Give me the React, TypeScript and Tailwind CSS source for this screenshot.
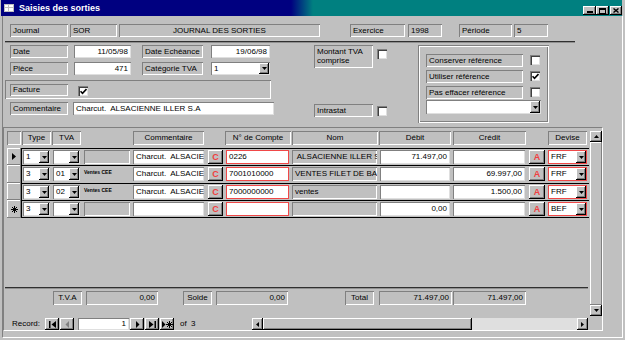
import clsx from 'clsx';
import type { ReactNode } from 'react';

// win98 bevels
const sunk = 'bg-[#c0c0c0] shadow-[inset_1px_1px_#808080,inset_-1px_-1px_#ffffff]';
const well = 'bg-white shadow-[inset_1px_1px_#808080,inset_-1px_-1px_#dfdfdf]';
const bevel =
  'bg-[#c0c0c0] shadow-[inset_-1px_-1px_#000000,inset_1px_1px_#ffffff,inset_-2px_-2px_#808080]';
const raised = 'bg-[#c0c0c0] shadow-[inset_-1px_-1px_#808080,inset_1px_1px_#ffffff]';

type BoxProps = { className?: string; children?: ReactNode };

function Label({ className, children }: BoxProps) {
  return (
    <div
      className={clsx(
        'flex shrink-0 items-center overflow-hidden whitespace-pre px-[3px]',
        sunk,
        className
      )}
    >
      {children}
    </div>
  );
}

function Field({ className, children }: BoxProps) {
  return (
    <div
      className={clsx(
        'flex shrink-0 items-center overflow-hidden whitespace-pre px-[3px]',
        well,
        className
      )}
    >
      {children}
    </div>
  );
}

function RedField({ className, children }: BoxProps) {
  return (
    <div
      className={clsx(
        'flex shrink-0 items-center overflow-hidden whitespace-pre bg-white px-[3px] shadow-[inset_0_0_0_1px_#f04848]',
        className
      )}
    >
      {children}
    </div>
  );
}

function DropButton() {
  return (
    <div className={clsx('m-[1px] flex w-[10px] shrink-0 items-center justify-center', bevel)}>
      <svg width="5" height="3" viewBox="0 0 5 3">
        <polygon points="0,0 5,0 2.5,3" fill="#000" />
      </svg>
    </div>
  );
}

function Combo({ className, children, red }: BoxProps & { red?: boolean }) {
  return (
    <div
      className={clsx(
        'flex shrink-0',
        red ? 'bg-white shadow-[inset_0_0_0_1px_#f04848]' : well,
        className
      )}
    >
      <div className="flex flex-1 items-center overflow-hidden whitespace-pre pl-[3px]">
        {children}
      </div>
      <DropButton />
    </div>
  );
}

function Check({ checked, className }: { checked?: boolean; className?: string }) {
  return (
    <div
      className={clsx(
        'flex h-[10px] w-[10px] shrink-0 items-center justify-center bg-white shadow-[inset_1px_1px_#808080,inset_2px_2px_#404040,inset_-1px_-1px_#dfdfdf]',
        className
      )}
    >
      {checked ? (
        <svg width="7" height="7" viewBox="0 0 7 7" className="ml-[1px] mt-[1px]">
          <path d="M0.5 3.2 L2.5 5.3 L6.5 1" stroke="#000" strokeWidth="1.6" fill="none" />
        </svg>
      ) : null}
    </div>
  );
}

function RedBtn({ className, children }: BoxProps) {
  return (
    <div
      className={clsx(
        'flex shrink-0 items-center justify-center text-[9px] font-bold text-[#f04040]',
        bevel,
        className
      )}
    >
      {children}
    </div>
  );
}

function Star({ x = 0 }: { x?: number }) {
  return (
    <g stroke="#000" strokeWidth="1" transform={`translate(${x} 0)`}>
      <path d="M3.5 0 V7 M0 3.5 H7 M1 1 L6 6 M6 1 L1 6" />
    </g>
  );
}

function TitleBar() {
  return (
    <div className="ml-[1px] mr-[3px] flex h-[16px] shrink-0 items-start bg-[linear-gradient(90deg,#000080_0px,#000080_290px,#008080_312px,#008080_100%)]">
      <svg width="10" height="8" viewBox="0 0 10 8" className="ml-[3px] mt-[4px]">
        <rect x="0" y="0" width="10" height="8" fill="#c0c0c0" />
        <rect x="1" y="1" width="3" height="2" fill="#fff" />
        <rect x="5" y="1" width="4" height="2" fill="#fff" />
        <rect x="1" y="4" width="3" height="3" fill="#fff" />
        <rect x="5" y="4" width="4" height="3" fill="#fff" />
      </svg>
      <span className="ml-[5px] text-[9px] font-bold leading-[16px] text-white">
        Saisies des sorties
      </span>
      <div className="ml-auto mt-[6px] flex">
        <div className={clsx('flex h-[9px] w-[13px] items-end justify-center pb-[2px]', bevel)}>
          <svg width="6" height="2">
            <rect width="6" height="2" fill="#000" />
          </svg>
        </div>
        <div className={clsx('flex h-[9px] w-[13px] items-center justify-center', bevel)}>
          <svg width="7" height="6" viewBox="0 0 7 6">
            <rect x="0.5" y="0.5" width="6" height="5" fill="none" stroke="#000" />
            <rect x="0" y="0" width="7" height="2" fill="#000" />
          </svg>
        </div>
        <div className={clsx('ml-[1px] flex h-[9px] w-[12px] items-center justify-center', bevel)}>
          <svg width="6" height="5" viewBox="0 0 6 5">
            <path d="M0.5 0.5 L5.5 4.5 M5.5 0.5 L0.5 4.5" stroke="#000" strokeWidth="1.4" />
          </svg>
        </div>
      </div>
    </div>
  );
}

type Row = {
  h: string;
  sel: '' | 'cur' | 'new';
  type: string;
  tva: string;
  note: string;
  box: boolean;
  comment: string;
  compte: string;
  nom: string;
  debit: string;
  credit: string;
  devise: string;
  last?: boolean;
};

const rows: Row[] = [
  {
    h: 'h-[17px]',
    sel: 'cur',
    type: '1',
    tva: '',
    note: '',
    box: true,
    comment: 'Charcut.  ALSACIE',
    compte: '0226',
    nom: ' ALSACIENNE ILLER S',
    debit: '71.497,00',
    credit: '',
    devise: 'FRF'
  },
  {
    h: 'h-[18px]',
    sel: '',
    type: '3',
    tva: '01',
    note: 'Ventes CEE',
    box: false,
    comment: 'Charcut.  ALSACIE',
    compte: '7001010000',
    nom: 'VENTES FILET DE BA',
    debit: '',
    credit: '69.997,00',
    devise: 'FRF'
  },
  {
    h: 'h-[17px]',
    sel: '',
    type: '3',
    tva: '02',
    note: 'Ventes CEE',
    box: false,
    comment: 'Charcut.  ALSACIE',
    compte: '7000000000',
    nom: 'ventes',
    debit: '',
    credit: '1.500,00',
    devise: 'FRF'
  },
  {
    h: 'h-[18px]',
    sel: 'new',
    type: '3',
    tva: '',
    note: '',
    box: true,
    comment: '',
    compte: '',
    nom: '',
    debit: '0,00',
    credit: '',
    devise: 'BEF',
    last: true
  }
];

function DetailRow({ row }: { row: Row }) {
  return (
    <div className={clsx('flex', row.h)}>
      <div className={clsx('ml-[3px] flex w-[14px] shrink-0 items-center justify-center', raised)}>
        {row.sel === 'cur' ? (
          <svg width="4" height="7" viewBox="0 0 4 7">
            <polygon points="0,0 4,3.5 0,7" fill="#000" />
          </svg>
        ) : null}
        {row.sel === 'new' ? (
          <svg width="7" height="7" viewBox="0 0 7 7">
            <Star />
          </svg>
        ) : null}
      </div>
      <div
        className={clsx(
          'flex w-[568px] items-start border-l border-t border-black',
          row.last && 'border-b'
        )}
      >
        <Combo className="ml-[1px] mt-[1px] h-[14px] w-[27px]">{row.type}</Combo>
        <Combo className="ml-[3px] mt-[1px] h-[14px] w-[27px]">{row.tva}</Combo>
        {row.box ? (
          <div className={clsx('ml-[4px] mt-[1px] h-[14px] w-[46px] shrink-0', sunk)} />
        ) : (
          <div className="ml-[4px] mt-[3px] w-[46px] shrink-0 whitespace-nowrap text-[5px] font-bold leading-[6px]">
            {row.note}
          </div>
        )}
        <Field className="ml-[3px] mt-[1px] h-[14px] w-[71px]">{row.comment}</Field>
        <RedBtn className="ml-[4px] mt-[1px] h-[14px] w-[15px]">C</RedBtn>
        <RedField className="ml-[3px] mt-[1px] h-[14px] w-[63px]">{row.compte}</RedField>
        <Label className="ml-[3px] mt-[1px] h-[14px] w-[85px]">{row.nom}</Label>
        <Field className="ml-[3px] mt-[1px] h-[14px] w-[70px] justify-end">{row.debit}</Field>
        <Field className="ml-[3px] mt-[1px] h-[14px] w-[72px] justify-end">{row.credit}</Field>
        <RedBtn className="ml-[4px] mt-[1px] h-[14px] w-[16px]">A</RedBtn>
        <Combo red className="ml-[3px] mt-[1px] h-[14px] w-[39px]">
          {row.devise}
        </Combo>
      </div>
    </div>
  );
}

function NavBtn({ className, children }: BoxProps) {
  return (
    <div className={clsx('flex h-[12px] w-[14px] shrink-0 items-center justify-center', bevel, className)}>
      {children}
    </div>
  );
}

function SubForm() {
  return (
    <div className="mt-[4px] flex h-[204px] w-[600px] shrink-0 flex-col border border-b-white border-l-[#808080] border-r-white border-t-[#808080]">
      <div className="flex h-[189px]">
        <div className="flex w-[586px] flex-col pt-[3px]">
          {/* column headers */}
          <div className="flex h-[14px]">
            <div className={clsx('ml-[3px] w-[14px] shrink-0', sunk)} />
            <Label className="ml-[1px] h-[14px] w-[29px] justify-center">Type</Label>
            <Label className="ml-[1px] h-[14px] w-[29px] justify-center">TVA</Label>
            <Label className="ml-[52px] h-[14px] w-[71px] justify-center">Commentaire</Label>
            <Label className="ml-[21px] h-[14px] w-[66px] justify-center">N° de Compte</Label>
            <Label className="ml-[1px] h-[14px] w-[86px] justify-center">Nom</Label>
            <Label className="ml-[1px] h-[14px] w-[72px] justify-center">Débit</Label>
            <Label className="ml-[2px] h-[14px] w-[73px] justify-center">Crédit</Label>
            <Label className="ml-[22px] h-[14px] w-[39px] justify-center">Devise</Label>
          </div>

          <div className="mt-[3px] flex flex-col">
            {rows.map((r, i) => (
              <DetailRow key={i} row={r} />
            ))}
          </div>

          {/* footer totals */}
          <div className="ml-[1px] mt-[69px] h-[2px] w-[583px] border-b border-t border-b-[#909090] border-t-[#303030]" />
          <div className="mt-[2px] flex h-[14px]">
            <Label className="ml-[49px] h-[14px] w-[29px] justify-center">T.V.A</Label>
            <Label className="ml-[4px] h-[14px] w-[72px] justify-end">0,00</Label>
            <Label className="ml-[25px] h-[14px] w-[29px] justify-center">Solde</Label>
            <Label className="ml-[4px] h-[14px] w-[72px] justify-end">0,00</Label>
            <Label className="ml-[57px] h-[14px] w-[29px] justify-center">Total</Label>
            <Label className="ml-[5px] h-[14px] w-[73px] justify-end">71.497,00</Label>
            <Label className="ml-[1px] h-[14px] w-[73px] justify-end">71.497,00</Label>
          </div>
        </div>

        {/* vertical scrollbar */}
        <div className="flex w-[12px] flex-col pb-[1px] pt-[3px]">
          <div className={clsx('flex h-[11px] items-center justify-center', bevel)}>
            <svg width="5" height="3" viewBox="0 0 5 3">
              <polygon points="2.5,0 5,3 0,3" fill="#000" />
            </svg>
          </div>
          <div className={clsx('flex-1', raised)} />
          <div className={clsx('flex h-[11px] items-center justify-center', bevel)}>
            <svg width="5" height="3" viewBox="0 0 5 3">
              <polygon points="0,0 5,0 2.5,3" fill="#000" />
            </svg>
          </div>
        </div>
      </div>

      {/* record navigation + horizontal scrollbar */}
      <div className="mt-[1px] flex h-[12px] items-center">
        <span className="ml-[8px] w-[33px] shrink-0">Record:</span>
        <NavBtn>
          <svg width="7" height="7" viewBox="0 0 7 7">
            <rect x="0" y="0" width="1.5" height="7" fill="#000" />
            <polygon points="7,0 2.5,3.5 7,7" fill="#000" />
          </svg>
        </NavBtn>
        <NavBtn className="ml-[1px]">
          <svg width="5" height="7" viewBox="0 0 5 7">
            <polygon points="4,0 0.5,3.5 4,7" fill="#808080" />
          </svg>
        </NavBtn>
        <Field className="ml-[4px] h-[12px] w-[51px] justify-end">1</Field>
        <NavBtn className="ml-[1px]">
          <svg width="5" height="7" viewBox="0 0 5 7">
            <polygon points="1,0 4.5,3.5 1,7" fill="#000" />
          </svg>
        </NavBtn>
        <NavBtn className="ml-[1px]">
          <svg width="7" height="7" viewBox="0 0 7 7">
            <polygon points="0,0 4.5,3.5 0,7" fill="#000" />
            <rect x="5.5" y="0" width="1.5" height="7" fill="#000" />
          </svg>
        </NavBtn>
        <NavBtn className="ml-[1px]">
          <svg width="11" height="7" viewBox="0 0 11 7">
            <polygon points="0,0 3.5,3.5 0,7" fill="#000" />
            <Star x={4} />
          </svg>
        </NavBtn>
        <span className="ml-[6px] w-[20px] shrink-0 whitespace-pre">of  3</span>
        <div className="ml-[52px] flex h-[12px] w-[336px] shrink-0">
          <div className={clsx('flex w-[11px] items-center justify-center', bevel)}>
            <svg width="3" height="5" viewBox="0 0 3 5">
              <polygon points="3,0 0,2.5 3,5" fill="#000" />
            </svg>
          </div>
          <div className={clsx('w-[209px]', bevel)} />
          <div className="flex-1 bg-[#dfdfdf]" />
          <div className={clsx('flex w-[11px] items-center justify-center', bevel)}>
            <svg width="3" height="5" viewBox="0 0 3 5">
              <polygon points="0,0 3,2.5 0,5" fill="#000" />
            </svg>
          </div>
        </div>
        <div className="ml-[2px] h-[12px] w-[12px] shrink-0 bg-[#c0c0c0]" />
      </div>
    </div>
  );
}

export default function App() {
  return (
    <div className="flex h-[340px] w-[625px] flex-col overflow-hidden bg-[#c0c0c0] font-['Liberation_Sans',sans-serif] text-[8px] leading-none text-black">
      <TitleBar />
      <div className="mx-[2px] mb-[2px] flex flex-1 flex-col border-b border-l border-r border-b-white border-l-[#808080] border-r-white">
        {/* header: journal / exercice / période */}
        <div className="mt-[8px] flex h-[13px]">
          <Label className="ml-[7px] h-[13px] w-[58px]">Journal</Label>
          <Label className="ml-[2px] h-[13px] w-[47px]">SOR</Label>
          <Label className="ml-[2px] h-[13px] w-[201px] justify-center">JOURNAL DES SORTIES</Label>
          <Label className="ml-[30px] h-[13px] w-[55px]">Exercice</Label>
          <Label className="ml-[3px] h-[13px] w-[34px]">1998</Label>
          <Label className="ml-[17px] h-[13px] w-[53px]">Période</Label>
          <Label className="ml-[2px] h-[13px] w-[34px]">5</Label>
        </div>
        <div className="ml-[2px] mt-[4px] h-[2px] w-[570px] border-b border-t border-b-[#909090] border-t-[#303030]" />

        <div className="mt-[2px] flex items-start">
          {/* left fields */}
          <div className="ml-[2px] flex w-[270px] shrink-0 flex-col">
            <div className="flex h-[13px]">
              <Label className="ml-[5px] h-[13px] w-[58px]">Date</Label>
              <Field className="ml-[6px] h-[13px] w-[57px] justify-end">11/05/98</Field>
              <Label className="ml-[11px] h-[13px] w-[61px]">Date Echéance</Label>
              <Field className="ml-[8px] h-[13px] w-[59px] justify-end">19/06/98</Field>
            </div>
            <div className="mt-[4px] flex h-[13px]">
              <Label className="ml-[5px] h-[13px] w-[58px]">Pièce</Label>
              <Field className="ml-[6px] h-[13px] w-[57px] justify-end">471</Field>
              <Label className="ml-[11px] h-[13px] w-[61px]">Catégorie TVA</Label>
              <Combo className="ml-[8px] h-[13px] w-[59px]">1</Combo>
            </div>
            <div className={clsx('mt-[5px] flex h-[19px] w-[266px] items-start', sunk)}>
              <Label className="ml-[5px] mt-[4px] h-[12px] w-[58px]">Facture</Label>
              <Check checked className="ml-[10px] mt-[6px]" />
            </div>
            <div className="mt-[3px] flex h-[13px]">
              <Label className="ml-[5px] h-[13px] w-[58px]">Commentaire</Label>
              <Field className="ml-[5px] h-[13px] w-[201px]">Charcut.  ALSACIENNE ILLER S.A</Field>
            </div>
          </div>

          {/* TVA / intrastat */}
          <div className="ml-[39px] flex w-[72px] shrink-0 flex-col">
            <div className="flex items-start">
              <Label className="h-[23px] w-[59px] flex-col items-start justify-start pt-[2px] leading-[9px]">
                <span>Montant TVA</span>
                <span>comprise</span>
              </Label>
              <Check className="ml-[4px] mt-[4px]" />
            </div>
            <div className="mt-[36px] flex items-start">
              <Label className="h-[13px] w-[59px]">Intrastat</Label>
              <Check className="ml-[4px] mt-[2px]" />
            </div>
          </div>

          {/* référence group */}
          <div className="ml-[32px] flex h-[78px] w-[131px] shrink-0 flex-col pl-[8px] pt-[9px] shadow-[inset_1px_1px_#808080,inset_2px_2px_#ffffff,inset_-1px_-1px_#ffffff,inset_-2px_-2px_#808080]">
            <div className="flex items-start">
              <Label className="h-[13px] w-[97px]">Conserver référence</Label>
              <Check className="ml-[7px] mt-[1px]" />
            </div>
            <div className="mt-[3px] flex items-start">
              <Label className="h-[13px] w-[97px]">Utiliser référence</Label>
              <Check checked className="ml-[7px] mt-[1px]" />
            </div>
            <div className="mt-[3px] flex items-start">
              <Label className="h-[13px] w-[97px]">Pas effacer référence</Label>
              <Check className="ml-[7px] mt-[1px]" />
            </div>
            <Combo className="mt-[1px] h-[14px] w-[115px]" />
          </div>
        </div>

        <SubForm />
      </div>
    </div>
  );
}
